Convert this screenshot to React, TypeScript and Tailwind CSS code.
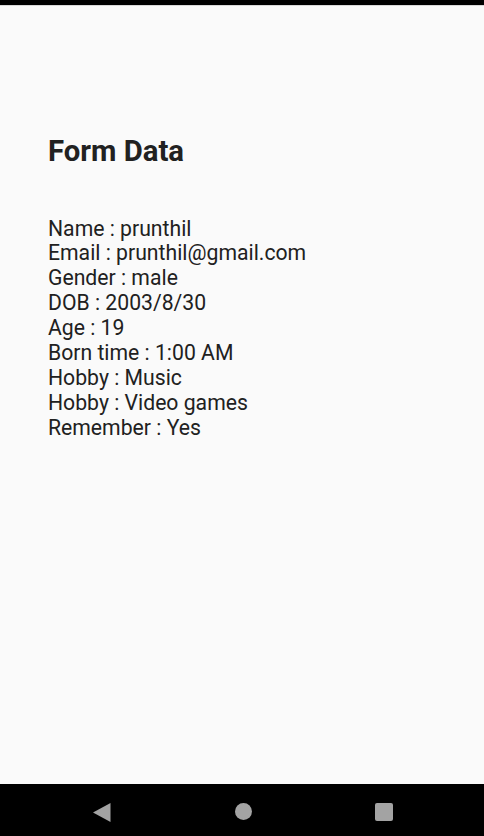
import React from "react";

const rows = [
  "Name : prunthil",
  "Email : prunthil@gmail.com",
  "Gender : male",
  "DOB : 2003/8/30",
  "Age : 19",
  "Born time : 1:00 AM",
  "Hobby : Music",
  "Hobby : Video games",
  "Remember : Yes",
];

export default function App() {
  return (
    <div
      className="flex h-[836px] w-[484px] flex-col bg-[#fafafa]"
      style={{ fontFamily: "Roboto, 'Noto Sans', sans-serif" }}
    >
      <div className="h-[5px] shrink-0 bg-black" />
      <div className="h-px shrink-0 bg-[#d8d8d8]" />
      <div className="flex flex-1 flex-col px-12 pt-[129px]">
        <h1 className="text-[29.3px] font-bold leading-[33px] text-[#212121]">Form Data</h1>
        <div className="mt-[48.5px] flex flex-col text-[21.2px] leading-[24.9px] text-[#212121]">
          {rows.map((r, i) => (
            <div key={i}>{r}</div>
          ))}
        </div>
      </div>
      <div className="flex h-[52px] shrink-0 items-start gap-[123.5px] bg-black pl-[93px] pt-[19px]">
        <svg width="18" height="19" viewBox="0 0 18 19">
          <path d="M17.5 0 L17.5 19 L0 9.5 Z" fill="#a3a3a3" />
        </svg>
        <div className="h-[17px] w-[17px] rounded-full bg-[#a3a3a3]" />
        <div className="h-[18px] w-[18px] rounded-[2px] bg-[#a3a3a3]" />
      </div>
    </div>
  );
}
